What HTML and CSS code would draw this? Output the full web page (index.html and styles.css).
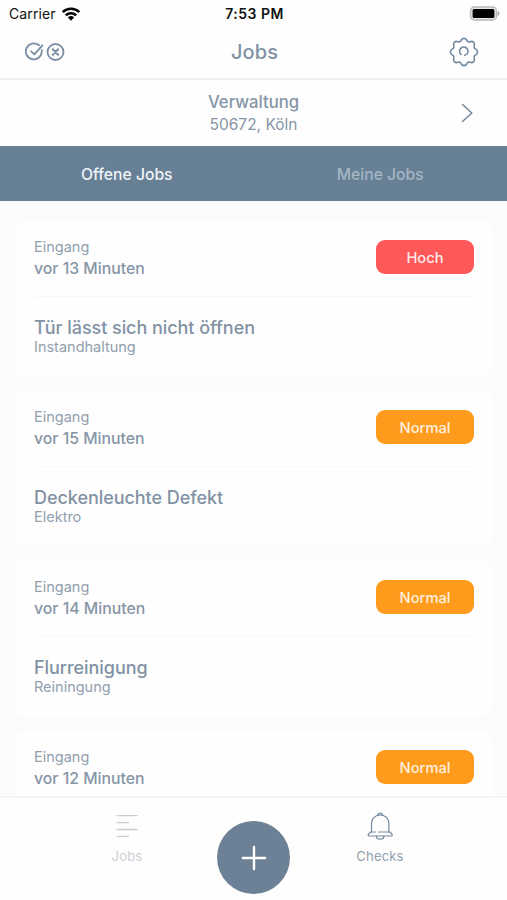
FILE: index.html
```html
<!DOCTYPE html>
<html lang="de">
<head>
  <meta charset="UTF-8"/>
  <meta name="viewport" content="width=device-width, initial-scale=1.0"/>
  <title>Jobs</title>
  <link rel="stylesheet" href="styles.css">
</head>
<body>

  <div class="status-bar">
    <div class="carrier">
      <span>Carrier</span>
      <svg width="20" height="14" viewBox="0 0 20 14">
        <g fill="none" stroke="#000" stroke-width="2.5">
          <path d="M1.7 5.1a12 12 0 0 1 16.6 0"/>
          <path d="M4.8 8.3a7.6 7.6 0 0 1 10.4 0"/>
        </g>
        <path d="M6.9 10.5a4.6 4.6 0 0 1 6.2 0L10 13.7z"/>
      </svg>
    </div>
    <div class="clock">7:53 PM</div>
    <div class="battery">
      <svg width="31" height="15" viewBox="0 0 31 15">
        <rect x="1.5" y="1" width="26" height="13" rx="3.8" fill="#e6e6e6" stroke="#b9b9b9" stroke-width="1.3"/>
        <rect x="3.6" y="3" width="21.8" height="9" rx="1.5" fill="#000"/>
        <path d="M28.6 5v5c1.2-.4 1.9-1.4 1.9-2.5S29.8 5.4 28.6 5z" fill="#a9a9a9"/>
      </svg>
    </div>
  </div>

  <header>
    <div class="header-left">
      <svg width="40" height="20" viewBox="0 0 40 20" fill="none" stroke="#7b8fa3" stroke-width="1.8" stroke-linecap="round" stroke-linejoin="round">
        <path d="M14 3.3a8 8 0 1 0 2.7 4.9"/>
        <path d="M6.2 9.3l3.1 3L17.4 3.3"/>
        <circle cx="30.5" cy="10" r="8"/>
        <path d="M27.8 7.3l5.4 5.4M33.2 7.3l-5.4 5.4" stroke-width="2"/>
      </svg>
    </div>
    <h1>Jobs</h1>
    <div class="header-right">
      <svg width="30" height="30" viewBox="-15 -15 30 30" fill="none" stroke="#7389a0" stroke-width="1.6" stroke-linecap="round">
        <path d="M-2.9-11.6A3.1 3.1 0 0 1 2.9-11.6A2.4 2.4 0 0 0 6.15-10.25A3.1 3.1 0 0 1 10.25-6.15A2.4 2.4 0 0 0 11.6-2.9A3.1 3.1 0 0 1 11.6 2.9A2.4 2.4 0 0 0 10.25 6.15A3.1 3.1 0 0 1 6.15 10.25A2.4 2.4 0 0 0 2.9 11.6A3.1 3.1 0 0 1-2.9 11.6A2.4 2.4 0 0 0-6.15 10.25A3.1 3.1 0 0 1-10.25 6.15A2.4 2.4 0 0 0-11.6 2.9A3.1 3.1 0 0 1-11.6-2.9A2.4 2.4 0 0 0-10.25-6.15A3.1 3.1 0 0 1-6.15-10.25A2.4 2.4 0 0 0-2.9-11.6z"/>
        <path d="M-3 2.4A4.2 4.2 0 1 1 .8 3.3"/>
      </svg>
    </div>
  </header>

  <div class="location">
    <div class="location-text">
      <p class="place">Verwaltung</p>
      <p class="address">50672, Köln</p>
    </div>
    <svg class="chevron" width="12" height="20" viewBox="0 0 12 20" fill="none" stroke="#71869b" stroke-width="1.5" stroke-linecap="round" stroke-linejoin="round">
      <path d="M1.5 1.5L10.8 10L1.5 18.5"/>
    </svg>
  </div>

  <nav class="tabs">
    <a class="tab active">Offene Jobs</a>
    <a class="tab">Meine Jobs</a>
  </nav>

  <main class="cards">
    <div class="card">
      <div class="card-top">
        <div>
          <p class="label">Eingang</p>
          <p class="time">vor 13 Minuten</p>
        </div>
        <span class="badge high">Hoch</span>
      </div>
      <div class="card-body">
        <h2>Tür lässt sich nicht öffnen</h2>
        <p class="label">Instandhaltung</p>
      </div>
    </div>

    <div class="card">
      <div class="card-top">
        <div>
          <p class="label">Eingang</p>
          <p class="time">vor 15 Minuten</p>
        </div>
        <span class="badge">Normal</span>
      </div>
      <div class="card-body">
        <h2>Deckenleuchte Defekt</h2>
        <p class="label">Elektro</p>
      </div>
    </div>

    <div class="card">
      <div class="card-top">
        <div>
          <p class="label">Eingang</p>
          <p class="time">vor 14 Minuten</p>
        </div>
        <span class="badge">Normal</span>
      </div>
      <div class="card-body">
        <h2>Flurreinigung</h2>
        <p class="label">Reiningung</p>
      </div>
    </div>

    <div class="card">
      <div class="card-top">
        <div>
          <p class="label">Eingang</p>
          <p class="time">vor 12 Minuten</p>
        </div>
        <span class="badge">Normal</span>
      </div>
    </div>
  </main>

  <footer>
    <a class="nav-item current">
      <svg width="28" height="28" viewBox="0 0 28 28" fill="none" stroke="#c8ced4" stroke-width="1.3" stroke-linecap="round">
        <path d="M4 3.7h20M4 10.6h11.5M4 17.5h20M4 24.3h11.5"/>
      </svg>
      <span>Jobs</span>
    </a>
    <button class="add-btn">
      <svg width="26" height="26" viewBox="0 0 26 26" stroke="#fff" stroke-width="2.4" stroke-linecap="round">
        <path d="M13 1.9v22.2M1.9 13h22.2"/>
      </svg>
    </button>
    <a class="nav-item">
      <svg width="28" height="28" viewBox="0 0 28 28" fill="none" stroke="#748a9f" stroke-width="1.2" stroke-linecap="round" stroke-linejoin="round">
        <path d="M11.8 3.4a2.4 2.4 0 0 1 4.8 0"/>
        <path d="M9.5 20H4.5L2.3 22.3c-.4.8 0 1.7 1 1.7h21.8c1 0 1.4-.9 1-1.7L24 20H12.5"/>
        <path d="M5.5 20V11.6a8.7 8.7 0 0 1 17.4 0V20M10.500 24.200a3.700 3 0 0 0 7.400 0"/>
      </svg>
      <span>Checks</span>
    </a>
  </footer>

</body>
</html>
```
FILE: styles.css
```css
* {
  margin: 0; padding: 0;
  box-sizing: border-box;
  font-family: Inter, 'Liberation Sans', sans-serif;
}

body {
  display: flex;
  flex-direction: column;
  height: 900px;
  background: #fcfcfc;
  color: #8695a6;
  overflow: hidden;
  white-space: nowrap;
}

/* Status bar */
.status-bar {
  display: grid;
  grid-template-columns: 1fr auto 1fr;
  align-items: center;
  height: 27px;
  padding: 0 7px 0 9px;
  background: #fefefe;
  color: #111;
  font-size: 14px;
}

.carrier {
  display: flex;
  align-items: center;
  gap: 5px;
  letter-spacing: 0.1px;
}

.clock {
  font-weight: 600;
  font-size: 14px;
  letter-spacing: 0.5px;
}

.battery {
  display: flex;
  justify-content: flex-end;
}

header {
  display: grid;
  grid-template-columns: 1fr auto 1fr;
  align-items: center;
  height: 53px;
  padding: 0 28px 1px;
  background: #fefefe;
  border-bottom: 2px solid #f0f0f0;
}

.header-left, .header-right {
  display: flex;
}

.header-left {
  margin-left: -3px;
}

.header-right {
  justify-content: flex-end;
}

h1 {
  font-size: 20px;
  font-weight: 500;
  letter-spacing: 0.1px;
  padding-left: 2px;
  color: #8192a4;
}

.location {
  display: grid;
  grid-template-columns: 1fr auto 1fr;
  align-items: center;
  height: 66px;
  padding: 0 34px;
  background: #fefefe;
}

.location-text {
  grid-column: 2;
  text-align: center;
}

.place {
  font-size: 16.7px;
  line-height: 22px;
  font-weight: 500;
}

.address {
  font-size: 15.5px;
  line-height: 23px;
}

.chevron {
  justify-self: end;
}

.tabs {
  display: flex;
  height: 55px;
  background: #678095;
}

.tab {
  flex: 1;
  line-height: 57px;
  text-align: center;
  font-size: 15.7px;
  font-weight: 500;
  color: #a5b6c4;
}

.tab.active {
  color: #f0f5f9;
}

/* Job list */
.cards {
  flex: 1;
  display: flex;
  flex-direction: column;
  gap: 15px;
  padding: 20px 15px 0;
  overflow: hidden;
}

.card {
  flex-shrink: 0;
  height: 155px;
  padding: 0 18px 0 19px;
  background: #fefefe;
  border-radius: 8px;
}

.card-top {
  display: flex;
  justify-content: space-between;
  align-items: center;
  height: 76px;
  border-bottom: 1px solid #f8f8f9;
}

.label {
  font-size: 14.5px;
  line-height: 20px;
  color: #929fae;
}

.time {
  font-size: 15.8px;
  line-height: 23px;
  font-weight: 500;
}

.badge {
  width: 98px;
  height: 34px;
  margin-bottom: 3px;
  line-height: 36px;
  border-radius: 9px;
  background: #ff9b1c;
  color: #fff0df;
  font-size: 14.7px;
  font-weight: 500;
  text-align: center;
}

.badge.high {
  background: #ff5858;
  color: #ffebeb;
}

.card-body {
  padding-top: 20px;
}

h2 {
  font-size: 18px;
  line-height: 22px;
  font-weight: 500;
  letter-spacing: -0.05px;
  color: #8192a4;
}

.card-body .label {
  line-height: 16px;
}

/* Bottom bar */
footer {
  display: flex;
  justify-content: center;
  height: 104px;
  background: #fefefe;
  border-top: 2px solid #f4f4f4;
}

.nav-item {
  display: flex;
  flex-direction: column;
  align-items: center;
  width: 180px;
  padding-top: 14px;
  font-size: 13px;
  letter-spacing: 0.2px;
  color: #929eac;
}

.nav-item span {
  margin-top: 8px;
}

.nav-item.current {
  color: #cbd0d6;
}

.add-btn {
  display: flex;
  justify-content: center;
  align-items: center;
  width: 73px;
  height: 73px;
  margin-top: 23px;
  border: none;
  border-radius: 50%;
  background: #6d8196;
  cursor: pointer;
}
```
